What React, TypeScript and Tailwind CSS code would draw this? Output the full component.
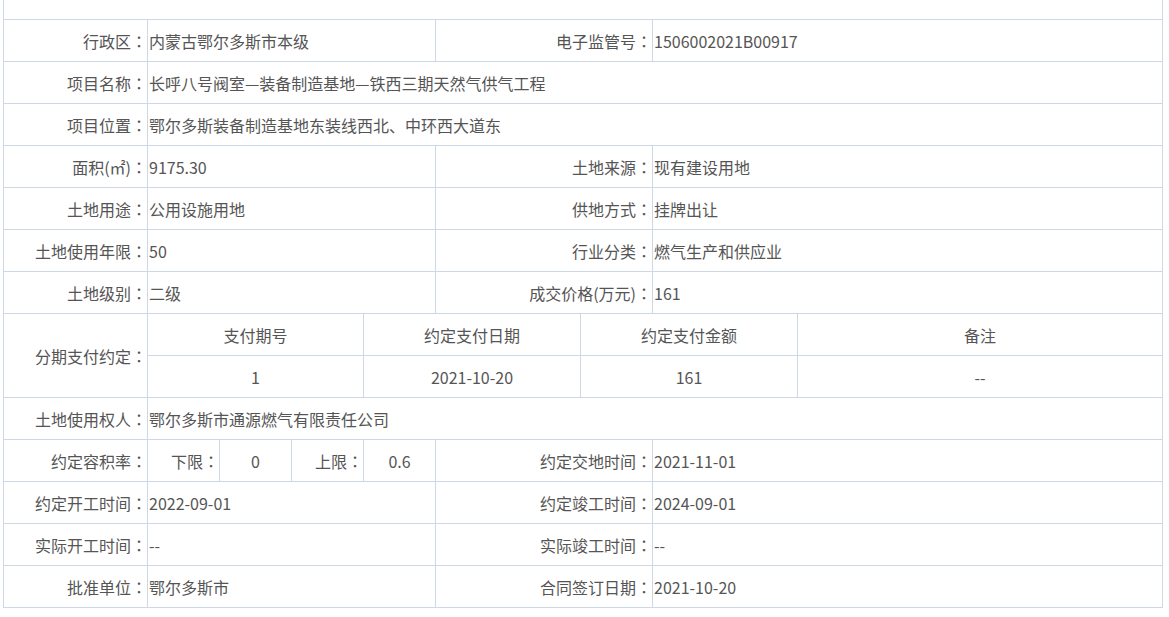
import React from 'react';

type Pair = [string, string];

const cell = 'bg-white flex items-center whitespace-nowrap';

// full-width colon, centred in its box as in the original font
const withColon = (text: string) =>
  text.endsWith('：') ? (
    <>
      {text.slice(0, -1)}
      <span className="font-['Noto_Sans_CJK_JP',sans-serif]">：</span>
    </>
  ) : (
    text
  );

const Label: React.FC<{ text: string; span?: string }> = ({ text, span = '' }) => (
  <div className={`${cell} ${span} justify-end`}>{withColon(text)}</div>
);

const Value: React.FC<{ text: string; span?: string }> = ({ text, span = '' }) => (
  <div className={`${cell} ${span} justify-start pl-px`}>{text}</div>
);

const Center: React.FC<{ text: string; span?: string }> = ({ text, span = '' }) => (
  <div className={`${cell} ${span} justify-center`}>{text}</div>
);

// two label/value pairs on one row
const TwoPairs: React.FC<{ left: Pair; right: Pair }> = ({ left, right }) => (
  <>
    <Label text={left[0]} />
    <Value text={left[1]} span="col-span-4" />
    <Label text={right[0]} span="col-span-2" />
    <Value text={right[1]} span="col-span-2" />
  </>
);

const FullRow: React.FC<{ item: Pair }> = ({ item }) => (
  <>
    <Label text={item[0]} />
    <Value text={item[1]} span="col-span-8" />
  </>
);

export default function App() {
  const midRows: { left: Pair; right: Pair }[] = [
    { left: ['面积(㎡)：', '9175.30'], right: ['土地来源：', '现有建设用地'] },
    { left: ['土地用途：', '公用设施用地'], right: ['供地方式：', '挂牌出让'] },
    { left: ['土地使用年限：', '50'], right: ['行业分类：', '燃气生产和供应业'] },
    { left: ['土地级别：', '二级'], right: ['成交价格(万元)：', '161'] },
  ];

  const bottomRows: { left: Pair; right: Pair }[] = [
    { left: ['约定开工时间：', '2022-09-01'], right: ['约定竣工时间：', '2024-09-01'] },
    { left: ['实际开工时间：', '--'], right: ['实际竣工时间：', '--'] },
    { left: ['批准单位：', '鄂尔多斯市'], right: ['合同签订日期：', '2021-10-20'] },
  ];

  return (
    <div className="min-h-screen bg-white font-['Noto_Sans_CJK_SC','Liberation_Sans',sans-serif] text-[16px] text-[#555555] [text-spacing-trim:space-all]">
      <div className="ml-[3px] w-[1160px] grid grid-cols-[143px_71px_71px_71px_71px_144px_71px_144px_364px] grid-rows-[19px_repeat(14,41px)] gap-px bg-[#cdd7e6] px-px pb-px">
        <div className="bg-white col-span-9" />

        <TwoPairs left={['行政区：', '内蒙古鄂尔多斯市本级']} right={['电子监管号：', '1506002021B00917']} />
        <FullRow item={['项目名称：', '长呼八号阀室—装备制造基地—铁西三期天然气供气工程']} />
        <FullRow item={['项目位置：', '鄂尔多斯装备制造基地东装线西北、中环西大道东']} />

        {midRows.map((r, i) => (
          <TwoPairs key={i} left={r.left} right={r.right} />
        ))}

        {/* 分期支付 */}
        <Label text="分期支付约定：" span="row-span-2" />
        <Center text="支付期号" span="col-span-3" />
        <Center text="约定支付日期" span="col-span-2" />
        <Center text="约定支付金额" span="col-span-2" />
        <Center text="备注" />
        <Center text="1" span="col-span-3" />
        <Center text="2021-10-20" span="col-span-2" />
        <Center text="161" span="col-span-2" />
        <Center text="--" />

        <FullRow item={['土地使用权人：', '鄂尔多斯市通源燃气有限责任公司']} />

        <Label text="约定容积率：" />
        <Label text="下限：" />
        <Center text="0" />
        <Label text="上限：" />
        <Center text="0.6" />
        <Label text="约定交地时间：" span="col-span-2" />
        <Value text="2021-11-01" span="col-span-2" />

        {bottomRows.map((r, i) => (
          <TwoPairs key={i} left={r.left} right={r.right} />
        ))}
      </div>
    </div>
  );
}
